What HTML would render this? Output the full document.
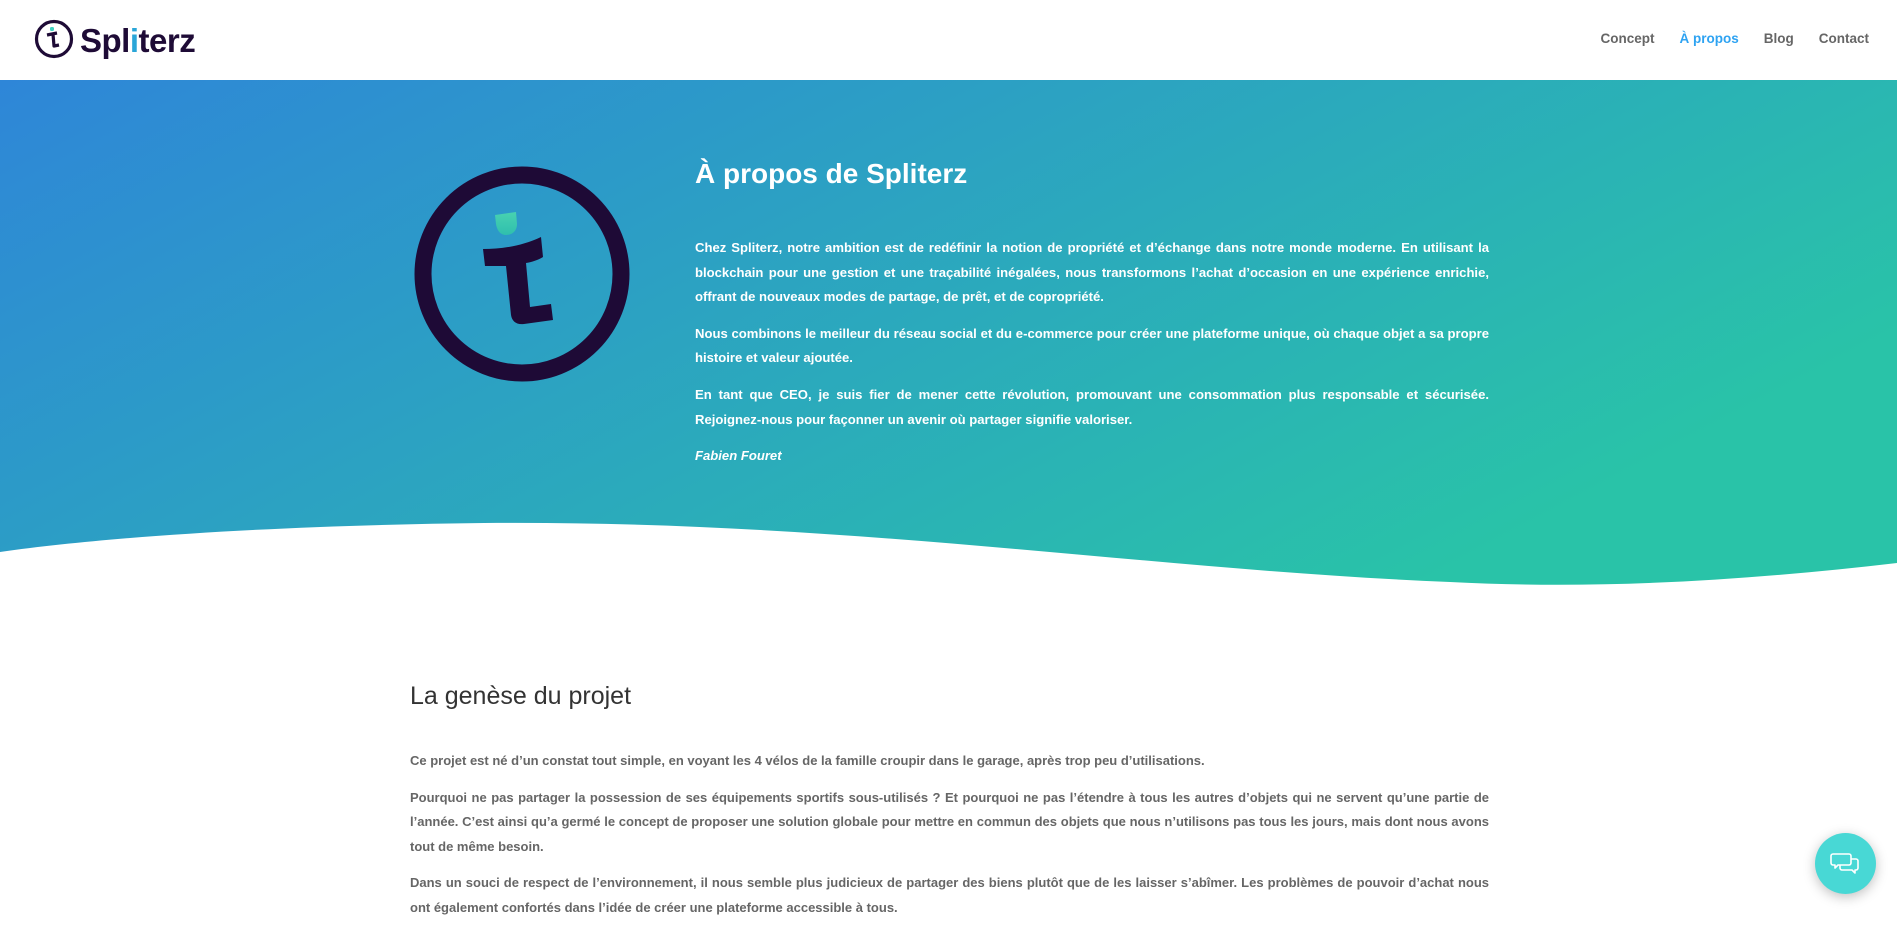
<!DOCTYPE html>
<html><head><meta charset="utf-8"><style>
*{margin:0;padding:0;box-sizing:border-box}
html,body{width:1897px;height:916px;overflow:hidden;background:#fff;font-family:"Liberation Sans",Arial,sans-serif}
header{position:absolute;top:0;left:0;width:1897px;height:80px;background:#fff}
.logo{position:absolute;left:34px;top:18px}
nav{position:absolute;top:31px;right:28px;font-size:13.5px;font-weight:700;color:#666}
nav span{margin-left:25px}
nav .a{color:#2ea3f2}
.hero{position:absolute;top:80px;left:0;width:1897px;height:510px}
.big{position:absolute;left:409px;top:161px}
h1{position:absolute;left:695px;top:158px;color:#fff;font-size:28px;font-weight:700}
.txt{position:absolute;left:695px;top:236px;width:794px;color:#fff;font-size:13.1px;font-weight:700;line-height:24.6px;text-align:justify}
.txt p{margin-bottom:12px}
h2{position:absolute;left:410px;top:682px;font-size:25px;font-weight:400;color:#333}
.body{position:absolute;left:410px;top:749px;width:1079px;color:#666;font-size:13px;font-weight:700;line-height:24.6px;text-align:justify}
.body p{margin-bottom:12px}
.chat{position:absolute;left:1815px;top:833px;width:61px;height:61px;border-radius:50%;background:#48d8d5;box-shadow:0 3px 12px rgba(0,0,0,.25)}
</style></head><body>
<header>
<svg class="logo" width="170" height="42" viewBox="0 0 170 42">
<circle cx="20" cy="21" r="17.5" fill="none" stroke="#1e0b36" stroke-width="3.2"/>
<rect x="16" y="9" width="4" height="4" rx="1.5" fill="#3fd0c0"/>
<path d="M13 17 L23 15 M19 16 L20 28 L25 27" fill="none" stroke="#1e0b36" stroke-width="3.2" stroke-linejoin="round"/>
<text x="46" y="34" font-family="Liberation Sans,Arial,sans-serif" font-size="33" font-weight="700" fill="#1e0b36" letter-spacing="-0.5">Spl<tspan fill="#2aa6d8">i</tspan>terz</text>
</svg>
<nav><span>Concept</span><span class="a">À propos</span><span>Blog</span><span>Contact</span></nav>
</header>
<svg class="hero" width="1897" height="510" viewBox="0 0 1897 510">
<defs><linearGradient id="g" x1="0" y1="0" x2="1" y2="0.5"><stop offset="0" stop-color="#2e86d8"/><stop offset="1" stop-color="#29c3a8"/></linearGradient>
<linearGradient id="d" x1="0" y1="0" x2="0" y2="1"><stop offset="0" stop-color="#48d2b0"/><stop offset="1" stop-color="#2fbfae"/></linearGradient></defs>
<path d="M0 0 H1897 V483 C1750 500 1600 510 1450 502 C1150 490 850 440 484 443 C300 445 120 455 0 472 Z" fill="url(#g)"/>
</svg>
<svg class="big" width="226" height="226" viewBox="-113 -113 226 226">
<circle cx="0" cy="0" r="99" fill="none" stroke="#1e0a36" stroke-width="17"/>
<path d="M-27 -59 L-6 -62 L-5 -50 C-5 -43 -10 -39 -16 -39 C-22 -39 -25 -44 -26 -50 Z" fill="url(#d)"/>
<path d="M-39 -25 C-20 -25 0 -28 19 -37 L21 -17 C16 -14 10 -12 4 -11 L8 33 L29 30 L31 46 L2 50 C-6 51 -10 47 -11 41 L-16 -8 L-37 -8 Z" fill="#1e0a36"/>
</svg>
<h1>À propos de Spliterz</h1>
<div class="txt">
<p>Chez Spliterz, notre ambition est de redéfinir la notion de propriété et d’échange dans notre monde moderne. En utilisant la blockchain pour une gestion et une traçabilité inégalées, nous transformons l’achat d’occasion en une expérience enrichie, offrant de nouveaux modes de partage, de prêt, et de copropriété.</p>
<p>Nous combinons le meilleur du réseau social et du e-commerce pour créer une plateforme unique, où chaque objet a sa propre histoire et valeur ajoutée.</p>
<p>En tant que CEO, je suis fier de mener cette révolution, promouvant une consommation plus responsable et sécurisée. Rejoignez-nous pour façonner un avenir où partager signifie valoriser.</p>
<p><i>Fabien Fouret</i></p>
</div>
<h2>La genèse du projet</h2>
<div class="body">
<p>Ce projet est né d’un constat tout simple, en voyant les 4 vélos de la famille croupir dans le garage, après trop peu d’utilisations.</p>
<p>Pourquoi ne pas partager la possession de ses équipements sportifs sous-utilisés ? Et pourquoi ne pas l’étendre à tous les autres d’objets qui ne servent qu’une partie de l’année. C’est ainsi qu’a germé le concept de proposer une solution globale pour mettre en commun des objets que nous n’utilisons pas tous les jours, mais dont nous avons tout de même besoin.</p>
<p>Dans un souci de respect de l’environnement, il nous semble plus judicieux de partager des biens plutôt que de les laisser s’abîmer. Les problèmes de pouvoir d’achat nous ont également confortés dans l’idée de créer une plateforme accessible à tous.</p>
</div>
<div class="chat"><svg width="61" height="61" viewBox="0 0 61 61"><path d="M18 21 h16 a2 2 0 0 1 2 2 v7 a2 2 0 0 1 -2 2 h-11 l-3 3 v-3 h-2 a2 2 0 0 1 -2 -2 v-7 a2 2 0 0 1 2 -2z M36 26 h5 a2 2 0 0 1 2 2 v7 a2 2 0 0 1 -2 2 h-1 v3 l-3 -3 h-10 a2 2 0 0 1 -2 -2 v-3" fill="none" stroke="#fff" stroke-width="1.6" stroke-linejoin="round"/></svg></div>
</body></html>
